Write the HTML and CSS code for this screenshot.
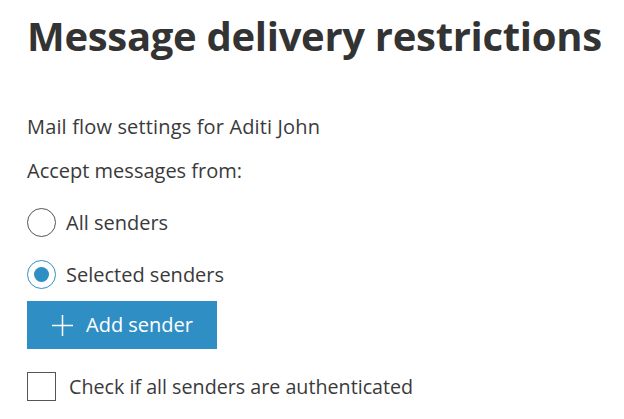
FILE: index.html
```html
<!DOCTYPE html>
<html>
<head>
<meta charset="utf-8">
<link rel="stylesheet" href="styles.css">
</head>
<body>
<div class="panel">
  <h1 class="title">Message delivery restrictions</h1>
  <p class="label first">Mail flow settings for Aditi John</p>
  <p class="label second">Accept messages from:</p>
  <div class="radio-row one">
    <span class="radio"></span>
    <span class="radio-text">All senders</span>
  </div>
  <div class="radio-row two">
    <span class="radio checked"><span class="dot"></span></span>
    <span class="radio-text">Selected senders</span>
  </div>
  <button class="add-btn">
    <svg class="plus" width="21" height="21" viewBox="0 0 21 21"><path d="M10.5 0V21M0 10.5H21" stroke="#fff" stroke-width="1.5" fill="none"/></svg>
    <span>Add sender</span>
  </button>
  <div class="check-row">
    <span class="checkbox"></span>
    <span class="check-text">Check if all senders are authenticated</span>
  </div>
</div>
</body>
</html>
```
FILE: styles.css
```css
html, body {
  margin: 0;
  padding: 0;
  background: #fff;
}
body {
  font-family: "Open Sans", "Noto Sans", sans-serif;
  color: #333;
}
.panel {
  display: flex;
  flex-direction: column;
  align-items: flex-start;
  padding: 8px 0 0 27px;
}
.title {
  margin: 0;
  font-size: 40px;
  font-weight: 700;
  line-height: 56px;
  color: #333;
  letter-spacing: -0.3px;
}
.label {
  margin: 0;
  font-size: 20px;
  line-height: 24px;
  color: #3a3a3a;
}
.label.first {
  margin-top: 51px;
  letter-spacing: 0.15px;
}
.label.second {
  margin-top: 20px;
}
.radio-row {
  display: flex;
  align-items: center;
  gap: 10px;
}
.radio-row.one {
  margin-top: 25px;
}
.radio-row.two {
  margin-top: 23px;
}
.radio {
  box-sizing: border-box;
  width: 29px;
  height: 29px;
  border-radius: 50%;
  border: 1.5px solid #555;
  display: flex;
  align-items: center;
  justify-content: center;
}
.radio.checked {
  border: 1px solid #2f8fc4;
}
.dot {
  width: 15px;
  height: 15px;
  border-radius: 50%;
  background: #2f8fc4;
}
.radio-text {
  font-size: 20px;
  line-height: 24px;
  color: #3a3a3a;
}
.add-btn {
  margin-top: 12px;
  display: flex;
  align-items: center;
  gap: 13px;
  width: 190px;
  height: 48px;
  padding: 0 0 0 25px;
  border: none;
  background: #2f8fc4;
  color: #fff;
  font-family: "Open Sans", "Noto Sans", sans-serif;
  font-size: 20px;
  line-height: 24px;
}
.plus {
  flex: none;
}
.check-row {
  margin-top: 23px;
  display: flex;
  align-items: center;
  gap: 13px;
}
.checkbox {
  box-sizing: border-box;
  width: 29px;
  height: 29px;
  border: 1.5px solid #555;
}
.check-text {
  font-size: 19.7px;
  line-height: 24px;
  color: #3a3a3a;
}
```
